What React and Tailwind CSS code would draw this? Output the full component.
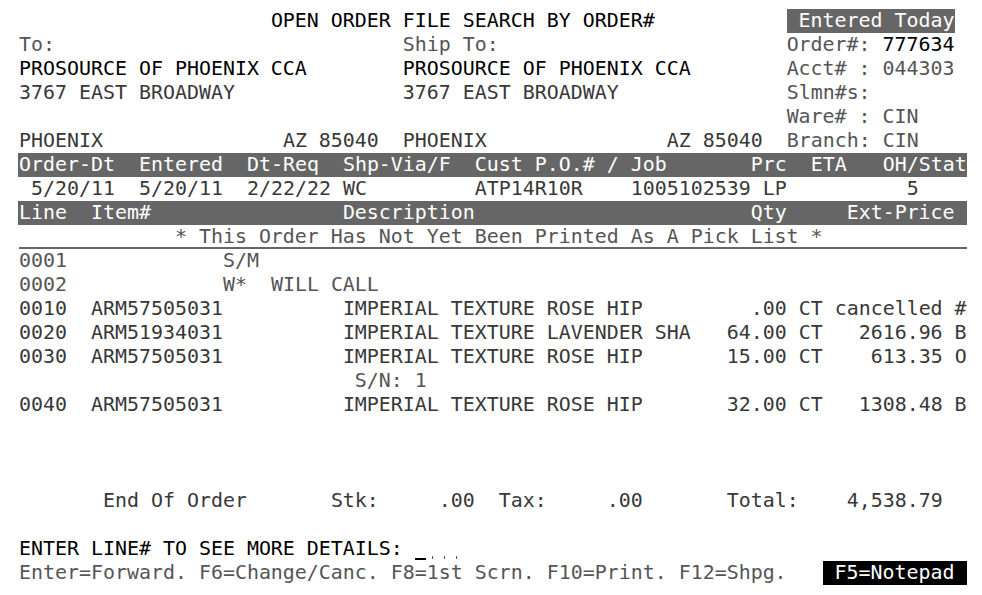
const KIND = {
  b: 'text-black',
  g: 'text-[#555555]',
  d: 'text-[#383838]',
  bar: 'bg-[#666666] text-white',
  inv: 'bg-black text-white',
};

// one screen row: segments are [column, text, kind]
function Row({ segs, className = '' }) {
  const out = [];
  let cursor = 0;
  segs.forEach(([col, text, kind], i) => {
    if (col > cursor) {
      out.push(
        <span key={'s' + i} className="whitespace-pre">
          {' '.repeat(col - cursor)}
        </span>
      );
    }
    out.push(
      <span key={'t' + i} className={`whitespace-pre h-6 ${KIND[kind]}`}>
        {text}
      </span>
    );
    cursor = Math.max(col, cursor) + text.length;
  });
  return <div className={`flex h-6 leading-6 ${className}`}>{out}</div>;
}

function HeadBar({ segs }) {
  return (
    <div className="-ml-px w-[949px] pl-px bg-[#666666]">
      <Row segs={segs.map(([c, t]) => [c, t, 'bar'])} />
    </div>
  );
}

export default function App() {
  return (
    <div
      className="w-[982px] h-[595px] bg-white pt-[9px] pl-[19px] text-[19.93px] overflow-hidden"
      style={{ fontFamily: '"DejaVu Sans Mono", "Liberation Mono", monospace' }}
    >
      <Row segs={[[21, 'OPEN ORDER FILE SEARCH BY ORDER#', 'b'], [64, ' Entered Today', 'bar']]} />
      <Row segs={[[0, 'To:', 'g'], [32, 'Ship To:', 'g'], [64, 'Order#: ', 'g'], [72, '777634', 'b']]} />
      <Row
        segs={[
          [0, 'PROSOURCE OF PHOENIX CCA', 'b'],
          [32, 'PROSOURCE OF PHOENIX CCA', 'b'],
          [64, 'Acct# : 044303', 'g'],
        ]}
      />
      <Row segs={[[0, '3767 EAST BROADWAY', 'd'], [32, '3767 EAST BROADWAY', 'd'], [64, 'Slmn#s:', 'g']]} />
      <Row segs={[[64, 'Ware# : CIN', 'g']]} />
      <Row
        segs={[
          [0, 'PHOENIX', 'd'],
          [22, 'AZ 85040', 'd'],
          [32, 'PHOENIX', 'd'],
          [54, 'AZ 85040', 'd'],
          [64, 'Branch: CIN', 'g'],
        ]}
      />
      <HeadBar
        segs={[
          [0, 'Order-Dt'],
          [10, 'Entered'],
          [19, 'Dt-Req'],
          [27, 'Shp-Via/F'],
          [38, 'Cust P.O.# / Job'],
          [61, 'Prc'],
          [66, 'ETA'],
          [72, 'OH/Stat'],
        ]}
      />
      <Row
        segs={[
          [1, '5/20/11', 'd'],
          [10, '5/20/11', 'd'],
          [19, '2/22/22', 'd'],
          [27, 'WC', 'd'],
          [38, 'ATP14R10R', 'd'],
          [51, '1005102539', 'd'],
          [62, 'LP', 'd'],
          [74, '5', 'd'],
        ]}
      />
      <HeadBar segs={[[0, 'Line'], [6, 'Item#'], [27, 'Description'], [61, 'Qty'], [69, 'Ext-Price'], [78, ' ']]} />
      <div className="w-[948px] h-6 border-b-2 border-[#666666]">
        <Row segs={[[13, '* This Order Has Not Yet Been Printed As A Pick List *', 'g']]} className="h-[22px]" />
      </div>
      <Row segs={[[0, '0001', 'g'], [17, 'S/M', 'g']]} />
      <Row segs={[[0, '0002', 'g'], [17, 'W*', 'g'], [21, 'WILL CALL', 'g']]} />
      <Row
        segs={[
          [0, '0010', 'd'],
          [6, 'ARM57505031', 'd'],
          [27, 'IMPERIAL TEXTURE ROSE HIP', 'd'],
          [61, '.00', 'd'],
          [65, 'CT', 'd'],
          [68, 'cancelled #', 'd'],
        ]}
      />
      <Row
        segs={[
          [0, '0020', 'd'],
          [6, 'ARM51934031', 'd'],
          [27, 'IMPERIAL TEXTURE LAVENDER SHA', 'd'],
          [59, '64.00', 'd'],
          [65, 'CT', 'd'],
          [70, '2616.96 B', 'd'],
        ]}
      />
      <Row
        segs={[
          [0, '0030', 'd'],
          [6, 'ARM57505031', 'd'],
          [27, 'IMPERIAL TEXTURE ROSE HIP', 'd'],
          [59, '15.00', 'd'],
          [65, 'CT', 'd'],
          [71, '613.35 O', 'd'],
        ]}
      />
      <Row segs={[[28, 'S/N: 1', 'g']]} />
      <Row
        segs={[
          [0, '0040', 'd'],
          [6, 'ARM57505031', 'd'],
          [27, 'IMPERIAL TEXTURE ROSE HIP', 'd'],
          [59, '32.00', 'd'],
          [65, 'CT', 'd'],
          [70, '1308.48 B', 'd'],
        ]}
      />
      <div className="h-6" />
      <div className="h-6" />
      <div className="h-6" />
      <Row
        segs={[
          [7, 'End Of Order', 'd'],
          [26, 'Stk:', 'd'],
          [35, '.00', 'd'],
          [40, 'Tax:', 'd'],
          [49, '.00', 'd'],
          [59, 'Total:', 'd'],
          [69, '4,538.79', 'd'],
        ]}
      />
      <div className="h-6" />
      <div className="flex h-6 leading-6">
        <span className="whitespace-pre text-black">{'ENTER LINE# TO SEE MORE DETAILS: '}</span>
        <span className="w-3 h-6 flex items-end pb-px">
          <span className="block w-[11px] h-[2px] bg-black" />
        </span>
        {[0, 1, 2].map((i) => (
          <span key={i} className="w-3 h-6 flex items-end justify-center pb-[2px]">
            <span className="block w-px h-[3px] bg-[#555555]" />
          </span>
        ))}
      </div>
      <Row
        segs={[
          [0, 'Enter=Forward. F6=Change/Canc. F8=1st Scrn. F10=Print. F12=Shpg.', 'g'],
          [67, ' F5=Notepad ', 'inv'],
        ]}
      />
    </div>
  );
}
